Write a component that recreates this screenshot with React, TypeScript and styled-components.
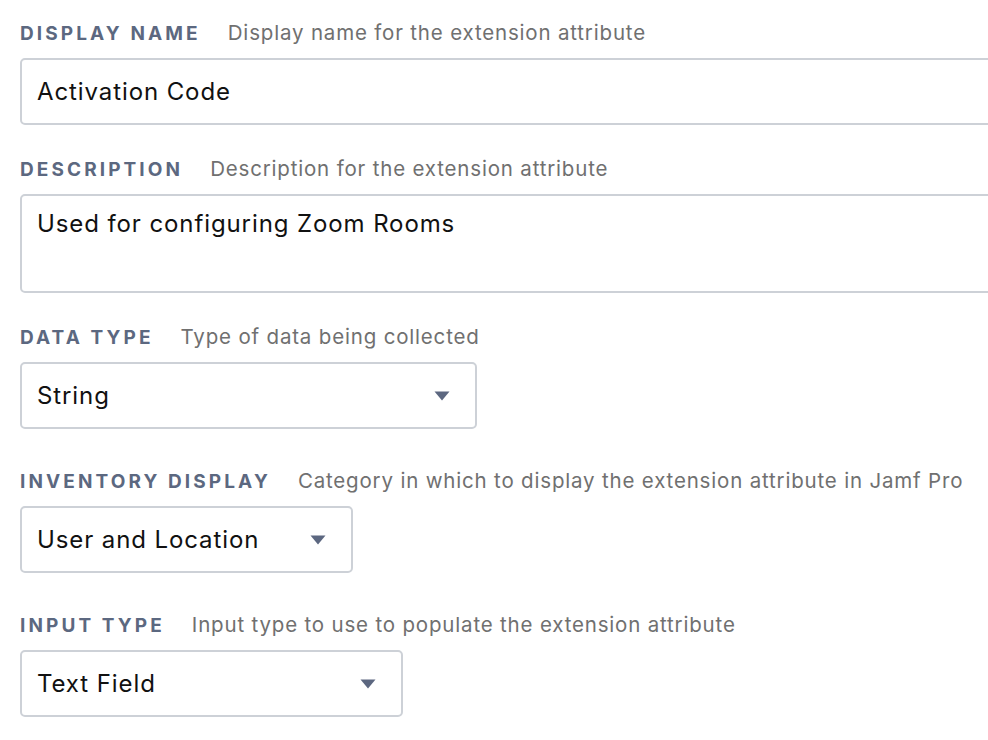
import React from "react";
import styled, { createGlobalStyle } from "styled-components";

const Global = createGlobalStyle`
  html, body { margin: 0; padding: 0; background: #ffffff; }
  body { overflow: hidden; font-family: Inter, "Open Sans", sans-serif; }
  * { box-sizing: border-box; }
`;

const Page = styled.div`
  padding: 20px 0 0 20px;
  width: 988px;
  overflow: hidden;
`;

const Field = styled.div<{ $gap: number }>`
  display: flex;
  flex-direction: column;
  margin-bottom: ${(p) => p.$gap}px;
`;

const LabelRow = styled.div`
  display: flex;
  align-items: baseline;
  gap: 27px;
  height: 26px;
  line-height: 26px;
  margin-bottom: 12px;
  white-space: nowrap;
`;

const Label = styled.span`
  font-family: Inter, "Open Sans", sans-serif;
  font-weight: 700;
  font-size: 19px;
  letter-spacing: 3.1px;
  color: #5c6880;
  text-transform: uppercase;
`;

const Hint = styled.span`
  font-family: Inter, "Open Sans", sans-serif;
  font-size: 20.5px;
  letter-spacing: 0.82px;
  color: #707070;
`;

const TextInput = styled.input`
  width: 1000px;
  height: 67px;
  border: 2px solid #cdd1d7;
  border-radius: 5px;
  padding: 0 15px;
  font-family: Inter, "Open Sans", sans-serif;
  font-size: 24px;
  letter-spacing: 0.9px;
  color: #111111;
  background: #fff;
  outline: none;
`;

const TextArea = styled.textarea`
  width: 1000px;
  height: 99px;
  border: 2px solid #cdd1d7;
  border-radius: 5px;
  padding: 13px 15px;
  font-family: Inter, "Open Sans", sans-serif;
  font-size: 24px;
  letter-spacing: 0.9px;
  line-height: 30px;
  color: #111111;
  background: #fff;
  resize: none;
  outline: none;
`;

const Select = styled.div<{ $width: number }>`
  width: ${(p) => p.$width}px;
  height: 67px;
  border: 2px solid #cdd1d7;
  border-radius: 5px;
  padding: 0 25px 0 15px;
  display: flex;
  align-items: center;
  justify-content: space-between;
  font-family: Inter, "Open Sans", sans-serif;
  font-size: 24px;
  letter-spacing: 0.9px;
  color: #111111;
  background: #fff;
`;

const Caret = () => (
  <svg width="16" height="10" viewBox="0 0 16 10">
    <path d="M0.5 0.5 L15.5 0.5 L8 9.5 Z" fill="#5c6780" />
  </svg>
);

export default function App() {
  return (
    <>
      <Global />
      <Page>
        <Field $gap={31}>
          <LabelRow>
            <Label>Display Name</Label>
            <Hint>Display name for the extension attribute</Hint>
          </LabelRow>
          <TextInput defaultValue="Activation Code" />
        </Field>
        <Field $gap={31}>
          <LabelRow>
            <Label>Description</Label>
            <Hint>Description for the extension attribute</Hint>
          </LabelRow>
          <TextArea defaultValue="Used for configuring Zoom Rooms" />
        </Field>
        <Field $gap={39}>
          <LabelRow>
            <Label>Data Type</Label>
            <Hint>Type of data being collected</Hint>
          </LabelRow>
          <Select $width={457}>
            <span>String</span>
            <Caret />
          </Select>
        </Field>
        <Field $gap={39}>
          <LabelRow>
            <Label>Inventory Display</Label>
            <Hint>Category in which to display the extension attribute in Jamf Pro</Hint>
          </LabelRow>
          <Select $width={333}>
            <span>User and Location</span>
            <Caret />
          </Select>
        </Field>
        <Field $gap={0}>
          <LabelRow>
            <Label>Input Type</Label>
            <Hint>Input type to use to populate the extension attribute</Hint>
          </LabelRow>
          <Select $width={383}>
            <span>Text Field</span>
            <Caret />
          </Select>
        </Field>
      </Page>
    </>
  );
}
